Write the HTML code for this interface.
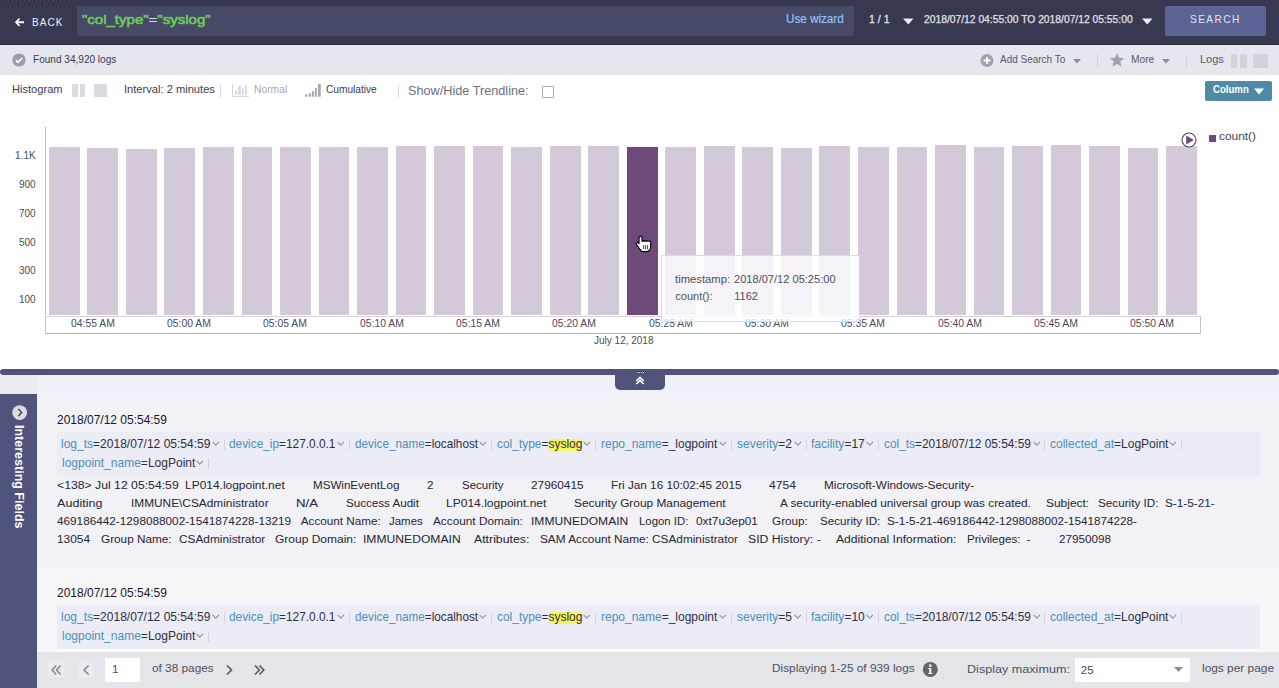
<!DOCTYPE html><html><head><meta charset="utf-8"><style>
*{margin:0;padding:0}
html,body{width:1279px;height:688px;overflow:hidden;background:#fff}
body{position:relative;font-family:"Liberation Sans", sans-serif}
.b{position:absolute}
.t{position:absolute;white-space:pre;line-height:1;font-family:"Liberation Sans", sans-serif}
.chev{display:inline-block;width:6px;height:6px;border-right:1px solid #9a9aa8;border-bottom:1px solid #9a9aa8;transform:translateY(-3px) rotate(45deg) scale(0.8);margin-left:3px;margin-right:4px}
.sep{display:inline-block;width:1px;height:11px;background:#cfcfd8;vertical-align:-1px}
</style></head><body><div class="b" style="left:0px;top:0px;width:1279px;height:45px;background:#363950;"></div>
<div class="b" style="left:0px;top:44px;width:1279px;height:1px;background:#2a2d40;"></div>
<svg class="b" style="left:0;top:0" width="80" height="10"><rect x="6" y="1" width="1" height="1" fill="#15172b"/><rect x="8" y="1" width="1" height="1" fill="#5a4852"/><rect x="10" y="1" width="1" height="1" fill="#15172b"/><rect x="12" y="1" width="1" height="1" fill="#5a4852"/><rect x="14" y="1" width="1" height="1" fill="#15172b"/><rect x="16" y="1" width="1" height="1" fill="#5a4852"/><rect x="18" y="1" width="1" height="1" fill="#15172b"/><rect x="20" y="1" width="1" height="1" fill="#5a4852"/><rect x="22" y="1" width="1" height="1" fill="#15172b"/><rect x="24" y="1" width="1" height="1" fill="#5a4852"/><rect x="26" y="1" width="1" height="1" fill="#15172b"/><rect x="28" y="1" width="1" height="1" fill="#5a4852"/><rect x="30" y="1" width="1" height="1" fill="#15172b"/><rect x="32" y="1" width="1" height="1" fill="#5a4852"/><rect x="34" y="1" width="1" height="1" fill="#15172b"/><rect x="36" y="1" width="1" height="1" fill="#5a4852"/><rect x="38" y="1" width="1" height="1" fill="#15172b"/><rect x="40" y="1" width="1" height="1" fill="#5a4852"/><rect x="42" y="1" width="1" height="1" fill="#15172b"/><rect x="44" y="1" width="1" height="1" fill="#5a4852"/><rect x="46" y="1" width="1" height="1" fill="#15172b"/><rect x="48" y="1" width="1" height="1" fill="#5a4852"/><rect x="50" y="1" width="1" height="1" fill="#15172b"/><rect x="52" y="1" width="1" height="1" fill="#5a4852"/><rect x="54" y="1" width="1" height="1" fill="#15172b"/><rect x="56" y="1" width="1" height="1" fill="#5a4852"/><rect x="58" y="1" width="1" height="1" fill="#15172b"/><rect x="60" y="1" width="1" height="1" fill="#5a4852"/><rect x="62" y="1" width="1" height="1" fill="#15172b"/><rect x="64" y="1" width="1" height="1" fill="#5a4852"/><rect x="66" y="1" width="1" height="1" fill="#15172b"/><rect x="68" y="1" width="1" height="1" fill="#5a4852"/><rect x="12" y="4" width="1" height="1" fill="#15172b"/><rect x="17" y="4" width="1" height="1" fill="#15172b"/><rect x="24" y="4" width="1" height="1" fill="#15172b"/><rect x="29" y="4" width="1" height="1" fill="#15172b"/><rect x="36" y="4" width="1" height="1" fill="#15172b"/><rect x="41" y="4" width="1" height="1" fill="#15172b"/><rect x="48" y="4" width="1" height="1" fill="#15172b"/><rect x="53" y="4" width="1" height="1" fill="#15172b"/><rect x="60" y="4" width="1" height="1" fill="#15172b"/><rect x="4" y="3" width="1" height="1" fill="#15172b"/><rect x="64" y="5" width="1" height="1" fill="#15172b"/></svg>
<svg class="b" style="left:14px;top:17px" width="11" height="11" viewBox="0 0 11 11"><path d="M0.8 5.2 L4.9 1 L6.2 2.3 L4 4.3 H10 V6.2 H4 L6.2 8.2 L4.9 9.5 Z" fill="#ffffff"/></svg>
<div class="t" style="left:32.00px;top:17px;font-size:10.5px;color:#f2f2f6;font-weight:400;letter-spacing:1.1px;transform:scaleX(0.9498);transform-origin:0 0;">BACK</div>
<div class="b" style="left:77px;top:6px;width:777px;height:30px;background:#474a67;"></div>
<div class="t" style="left:82.00px;top:13px;font-size:13.5px;color:#6bd158;font-weight:400;transform:scaleX(1.1122);transform-origin:0 0;-webkit-text-stroke:0.55px #6bd158;">"col_type"<span style="color:#d8d8e4;-webkit-text-stroke:0.3px #d8d8e4">=</span>"syslog"</div>
<div class="t" style="left:786.10px;top:13px;font-size:12px;color:#94c0f8;font-weight:400;transform:scaleX(0.9726);transform-origin:0 0;-webkit-text-stroke:0.2px #94c0f8;">Use wizard</div>
<div class="t" style="left:868.80px;top:14px;font-size:10.5px;color:#e2e2ea;font-weight:400;transform:scaleX(1.0052);transform-origin:0 0;-webkit-text-stroke:0.3px #e2e2ea;">1 / 1</div>
<svg class="b" style="left:903px;top:18px" width="11" height="7"><path d="M0 0.5 H10.5 L5.25 6.5 Z" fill="#eeeef4"/></svg>
<div class="t" style="left:924.00px;top:14px;font-size:10.5px;color:#e2e2ea;font-weight:400;transform:scaleX(0.9807);transform-origin:0 0;-webkit-text-stroke:0.25px #e2e2ea;">2018/07/12 04:55:00 TO 2018/07/12 05:55:00</div>
<svg class="b" style="left:1142px;top:18px" width="11" height="7"><path d="M0 0.5 H10.5 L5.25 6.5 Z" fill="#eeeef4"/></svg>
<div class="b" style="left:1165px;top:6px;width:101px;height:30px;background:#5e6396;border-radius:2px;"></div>
<div class="t" style="left:1190.10px;top:14px;font-size:10.5px;color:#e4e6f2;font-weight:400;letter-spacing:1.5px;transform:scaleX(0.9618);transform-origin:0 0;">SEARCH</div>
<div class="b" style="left:0px;top:45px;width:1279px;height:30px;background:#e6e6ee;"></div>
<svg class="b" style="left:12px;top:53px" width="14" height="14" viewBox="0 0 14 14"><circle cx="7" cy="7" r="6.6" fill="#9c9ca8"/><path d="M3.8 7.2 L6 9.4 L10.3 5" stroke="#fff" stroke-width="1.7" fill="none"/></svg>
<div class="t" style="left:32.70px;top:55px;font-size:10px;color:#3b3c52;font-weight:400;transform:scaleX(1.0056);transform-origin:0 0;">Found 34,920 logs</div>
<svg class="b" style="left:980px;top:54px" width="14" height="14" viewBox="0 0 14 14"><circle cx="7" cy="6.5" r="6.5" fill="#a2a2ad"/><path d="M7 3 V10 M3.5 6.5 H10.5" stroke="#fff" stroke-width="1.8"/></svg>
<div class="t" style="left:1000.20px;top:54px;font-size:10.5px;color:#55576b;font-weight:400;transform:scaleX(0.9507);transform-origin:0 0;">Add Search To</div>
<svg class="b" style="left:1073px;top:59px" width="9" height="5"><path d="M0 0 H8 L4 4.5 Z" fill="#8c8c98"/></svg>
<div class="b" style="left:1097px;top:54px;width:1px;height:14px;background:#d2d2da;"></div>
<svg class="b" style="left:1109px;top:52px" width="16" height="16" viewBox="0 0 16 16"><path d="M8 1 L10.1 5.8 L15.2 6.2 L11.3 9.5 L12.5 14.6 L8 11.9 L3.5 14.6 L4.7 9.5 L0.8 6.2 L5.9 5.8 Z" fill="#a2a2ad"/></svg>
<div class="t" style="left:1130.70px;top:54px;font-size:10.5px;color:#55576b;font-weight:400;transform:scaleX(0.9698);transform-origin:0 0;">More</div>
<svg class="b" style="left:1162px;top:59px" width="9" height="5"><path d="M0 0 H8 L4 4.5 Z" fill="#8c8c98"/></svg>
<div class="b" style="left:1186px;top:54px;width:1px;height:14px;background:#d2d2da;"></div>
<div class="t" style="left:1199.50px;top:54px;font-size:10.5px;color:#55576b;font-weight:400;transform:scaleX(1.0483);transform-origin:0 0;">Logs</div>
<div class="b" style="left:1231px;top:54px;width:6px;height:14px;background:#d2d2da;"></div>
<div class="b" style="left:1240px;top:54px;width:7px;height:14px;background:#d2d2da;"></div>
<div class="b" style="left:1253px;top:54px;width:15px;height:14px;background:#d2d2da;"></div>
<div class="t" style="left:12.30px;top:84px;font-size:11px;color:#3b3c52;font-weight:400;transform:scaleX(1.0092);transform-origin:0 0;">Histogram</div>
<div class="b" style="left:72px;top:84px;width:6px;height:13px;background:#dcdae2;"></div>
<div class="b" style="left:80px;top:84px;width:5px;height:13px;background:#dcdae2;"></div>
<div class="b" style="left:94px;top:84px;width:13px;height:13px;background:#dcdae2;"></div>
<div class="t" style="left:124.00px;top:84px;font-size:11px;color:#3b3c52;font-weight:400;transform:scaleX(1.0113);transform-origin:0 0;">Interval: 2 minutes</div>
<div class="b" style="left:220px;top:84px;width:1px;height:14px;background:#d8d8e0;"></div>
<svg class="b" style="left:228px;top:80px" width="28" height="20" viewBox="0 0 28 20"><rect x="4" y="4.1" width="1" height="12.7" fill="#d6d4dc"/><rect x="4" y="15.8" width="17" height="1.1" fill="#d6d4dc"/><rect x="7.1" y="10.2" width="1.7" height="4.6" fill="#d9d7df"/><rect x="10.2" y="6.1" width="2.6" height="8.7" fill="#d9d7df"/><rect x="13.8" y="8.1" width="2" height="6.7" fill="#d9d7df"/><rect x="17" y="5.1" width="1.9" height="9.7" fill="#d9d7df"/></svg>
<div class="t" style="left:253.60px;top:84px;font-size:10.5px;color:#a6a6b2;font-weight:400;transform:scaleX(0.9817);transform-origin:0 0;">Normal</div>
<svg class="b" style="left:300px;top:80px" width="28" height="20" viewBox="0 0 28 20"><rect x="5.2" y="14.5" width="2.6" height="2.2" fill="#a6a8b6"/><rect x="8.9" y="13.2" width="2" height="3.5" fill="#a6a8b6"/><rect x="11.9" y="11.2" width="2.1" height="5.5" fill="#a6a8b6"/><rect x="15" y="8" width="1.9" height="8.7" fill="#a6a8b6"/><rect x="18" y="3.9" width="2.8" height="12.8" fill="#a6a8b6"/></svg>
<div class="t" style="left:326.10px;top:84px;font-size:10.5px;color:#3b3c52;font-weight:400;transform:scaleX(0.9653);transform-origin:0 0;">Cumulative</div>
<div class="b" style="left:398px;top:85px;width:1px;height:13px;background:#d8d8e0;"></div>
<div class="t" style="left:407.60px;top:85px;font-size:12.5px;color:#6e6e7e;font-weight:400;transform:scaleX(1.0150);transform-origin:0 0;">Show/Hide Trendline:</div>
<div class="b" style="left:542px;top:86px;width:12px;height:12px;background:#ffffff;border:1px solid #a8a8b2;box-sizing:border-box;border-radius:1px;"></div>
<div class="b" style="left:1205px;top:81px;width:67px;height:20px;background:#4f8aa8;border-radius:2px;"></div>
<div class="t" style="left:1212.80px;top:84px;font-size:10.5px;color:#ffffff;font-weight:700;transform:scaleX(0.9153);transform-origin:0 0;">Column</div>
<svg class="b" style="left:1254px;top:88px" width="11" height="7"><path d="M0 0.5 H10 L5 6.5 Z" fill="#ffffff"/></svg>
<div class="b" style="left:45px;top:127px;width:1px;height:188px;background:#bcbcc8;"></div>
<div class="t" style="left:15.12px;top:151px;font-size:10px;color:#4a4a5a;font-weight:400;">1.1K</div>
<div class="t" style="left:19.01px;top:180px;font-size:10px;color:#4a4a5a;font-weight:400;">900</div>
<div class="t" style="left:19.01px;top:209px;font-size:10px;color:#4a4a5a;font-weight:400;">700</div>
<div class="t" style="left:19.01px;top:238px;font-size:10px;color:#4a4a5a;font-weight:400;">500</div>
<div class="t" style="left:19.01px;top:266px;font-size:10px;color:#4a4a5a;font-weight:400;">300</div>
<div class="t" style="left:19.01px;top:295px;font-size:10px;color:#4a4a5a;font-weight:400;">100</div>
<div class="b" style="left:48.85px;top:147.0px;width:30.8px;height:168.0px;background:#d3c9d9"></div>
<div class="b" style="left:87.38px;top:147.8px;width:30.8px;height:167.2px;background:#d3c9d9"></div>
<div class="b" style="left:125.91px;top:149.4px;width:30.8px;height:165.6px;background:#d3c9d9"></div>
<div class="b" style="left:164.44px;top:147.5px;width:30.8px;height:167.5px;background:#d3c9d9"></div>
<div class="b" style="left:202.97px;top:147.2px;width:30.8px;height:167.8px;background:#d3c9d9"></div>
<div class="b" style="left:241.50px;top:147.0px;width:30.8px;height:168.0px;background:#d3c9d9"></div>
<div class="b" style="left:280.03px;top:147.0px;width:30.8px;height:168.0px;background:#d3c9d9"></div>
<div class="b" style="left:318.56px;top:146.6px;width:30.8px;height:168.4px;background:#d3c9d9"></div>
<div class="b" style="left:357.09px;top:146.7px;width:30.8px;height:168.3px;background:#d3c9d9"></div>
<div class="b" style="left:395.62px;top:145.8px;width:30.8px;height:169.2px;background:#d3c9d9"></div>
<div class="b" style="left:434.15px;top:145.9px;width:30.8px;height:169.1px;background:#d3c9d9"></div>
<div class="b" style="left:472.68px;top:146.2px;width:30.8px;height:168.8px;background:#d3c9d9"></div>
<div class="b" style="left:511.21px;top:147.0px;width:30.8px;height:168.0px;background:#d3c9d9"></div>
<div class="b" style="left:549.74px;top:145.9px;width:30.8px;height:169.1px;background:#d3c9d9"></div>
<div class="b" style="left:588.27px;top:145.8px;width:30.8px;height:169.2px;background:#d3c9d9"></div>
<div class="b" style="left:626.80px;top:146.9px;width:30.8px;height:168.1px;background:#6d4a7a"></div>
<div class="b" style="left:665.33px;top:147.0px;width:30.8px;height:168.0px;background:#d3c9d9"></div>
<div class="b" style="left:703.86px;top:145.9px;width:30.8px;height:169.1px;background:#d3c9d9"></div>
<div class="b" style="left:742.39px;top:146.9px;width:30.8px;height:168.1px;background:#d3c9d9"></div>
<div class="b" style="left:780.92px;top:147.8px;width:30.8px;height:167.2px;background:#d3c9d9"></div>
<div class="b" style="left:819.45px;top:145.9px;width:30.8px;height:169.1px;background:#d3c9d9"></div>
<div class="b" style="left:857.98px;top:146.9px;width:30.8px;height:168.1px;background:#d3c9d9"></div>
<div class="b" style="left:896.51px;top:146.9px;width:30.8px;height:168.1px;background:#d3c9d9"></div>
<div class="b" style="left:935.04px;top:145.2px;width:30.8px;height:169.8px;background:#d3c9d9"></div>
<div class="b" style="left:973.57px;top:146.6px;width:30.8px;height:168.4px;background:#d3c9d9"></div>
<div class="b" style="left:1012.10px;top:145.6px;width:30.8px;height:169.4px;background:#d3c9d9"></div>
<div class="b" style="left:1050.63px;top:145.2px;width:30.8px;height:169.8px;background:#d3c9d9"></div>
<div class="b" style="left:1089.16px;top:145.9px;width:30.8px;height:169.1px;background:#d3c9d9"></div>
<div class="b" style="left:1127.69px;top:147.8px;width:30.8px;height:167.2px;background:#d3c9d9"></div>
<div class="b" style="left:1166.22px;top:146.2px;width:30.8px;height:168.8px;background:#d3c9d9"></div>
<div class="b" style="left:45px;top:316px;width:1156px;height:18px;border:1px solid #c4c2ce;box-sizing:border-box;border-top-color:#d8d2de;border-bottom-color:#aeaebc;border-radius:0 0 1px 1px"></div>
<div class="t" style="left:70.70px;top:319px;font-size:10px;color:#4a4a5a;font-weight:400;transform:scaleX(1.0370);transform-origin:0 0;">04:55 AM</div>
<div class="t" style="left:167.03px;top:319px;font-size:10px;color:#4a4a5a;font-weight:400;transform:scaleX(1.0370);transform-origin:0 0;">05:00 AM</div>
<div class="t" style="left:263.36px;top:319px;font-size:10px;color:#4a4a5a;font-weight:400;transform:scaleX(1.0370);transform-origin:0 0;">05:05 AM</div>
<div class="t" style="left:359.69px;top:319px;font-size:10px;color:#4a4a5a;font-weight:400;transform:scaleX(1.0370);transform-origin:0 0;">05:10 AM</div>
<div class="t" style="left:456.02px;top:319px;font-size:10px;color:#4a4a5a;font-weight:400;transform:scaleX(1.0370);transform-origin:0 0;">05:15 AM</div>
<div class="t" style="left:552.35px;top:319px;font-size:10px;color:#4a4a5a;font-weight:400;transform:scaleX(1.0370);transform-origin:0 0;">05:20 AM</div>
<div class="t" style="left:648.68px;top:319px;font-size:10px;color:#4a4a5a;font-weight:400;transform:scaleX(1.0370);transform-origin:0 0;">05:25 AM</div>
<div class="t" style="left:745.01px;top:319px;font-size:10px;color:#4a4a5a;font-weight:400;transform:scaleX(1.0370);transform-origin:0 0;">05:30 AM</div>
<div class="t" style="left:841.34px;top:319px;font-size:10px;color:#4a4a5a;font-weight:400;transform:scaleX(1.0370);transform-origin:0 0;">05:35 AM</div>
<div class="t" style="left:937.67px;top:319px;font-size:10px;color:#4a4a5a;font-weight:400;transform:scaleX(1.0370);transform-origin:0 0;">05:40 AM</div>
<div class="t" style="left:1034.00px;top:319px;font-size:10px;color:#4a4a5a;font-weight:400;transform:scaleX(1.0370);transform-origin:0 0;">05:45 AM</div>
<div class="t" style="left:1130.33px;top:319px;font-size:10px;color:#4a4a5a;font-weight:400;transform:scaleX(1.0370);transform-origin:0 0;">05:50 AM</div>
<div class="t" style="left:593.60px;top:335px;font-size:10.5px;color:#4a4a5a;font-weight:400;transform:scaleX(0.9525);transform-origin:0 0;">July 12, 2018</div>
<div class="b" style="left:661px;top:255px;width:199px;height:67px;background:rgba(255,255,255,0.78);border:1px solid rgba(215,215,225,0.9);box-sizing:border-box;"></div>
<div class="t" style="left:675.30px;top:274px;font-size:11px;color:#4e4e5e;font-weight:400;transform:scaleX(1.0242);transform-origin:0 0;">timestamp:</div>
<div class="t" style="left:734.30px;top:274px;font-size:11px;color:#4e4e5e;font-weight:400;transform:scaleX(1.0064);transform-origin:0 0;">2018/07/12 05:25:00</div>
<div class="t" style="left:675.30px;top:291px;font-size:11px;color:#4e4e5e;font-weight:400;">count():</div>
<div class="t" style="left:734.30px;top:291px;font-size:11px;color:#4e4e5e;font-weight:400;">1162</div>
<svg class="b" style="left:630px;top:230px" width="26" height="26" viewBox="0 0 26 26"><path d="M9 7.6 Q10.5 4.8 12.1 7.6 L12.1 11.4 Q13.4 10.1 14.8 11.3 Q15.9 10.1 17.1 11.3 Q18.2 10.2 19.3 11.3 Q20.9 10.9 20.8 12.9 L20.6 18.4 Q19.6 21.6 17 21.6 L12.6 21.6 Q11.2 21.4 10.5 20.1 L6.3 14.3 Q5.6 12.5 7.3 12.5 Q8.2 12.6 9 13.7 Z" fill="#fff" stroke="#0a0a10" stroke-width="1.25" stroke-linejoin="round"/><path d="M13.6 15.2 V19.2 M15.6 15.2 V19.2 M17.6 15.2 V19.2" stroke="#2a2a35" stroke-width="0.9"/></svg>
<svg class="b" style="left:1181px;top:132px" width="16" height="16" viewBox="0 0 16 16"><circle cx="8" cy="8" r="7" fill="#fff" stroke="#4a4a55" stroke-width="1.1"/><path d="M5.2 3.6 L13 8 L5.2 12.4 Z" fill="#6d4a7a"/></svg>
<div class="b" style="left:1208.5px;top:134.5px;width:7.5px;height:7.5px;background:#6d4a7a;"></div>
<div class="t" style="left:1218.80px;top:131px;font-size:11.5px;color:#454556;font-weight:400;transform:scaleX(1.0351);transform-origin:0 0;">count()</div>
<div class="b" style="left:0px;top:375px;width:37px;height:19px;background:#ececf0;"></div>
<div class="b" style="left:37px;top:375px;width:1242px;height:19px;background:#eff1f8;"></div>
<div class="b" style="left:0px;top:369px;width:1279px;height:6px;background:#51547a;border-radius:3px;"></div>
<div class="b" style="left:615px;top:374px;width:50px;height:16px;background:#51547a;border-radius:0 0 5px 5px"></div>
<svg class="b" style="left:635px;top:370px" width="10" height="16" viewBox="0 0 10 16"><rect x="2" y="1" width="1" height="1" fill="#22243a"/><rect x="4" y="1" width="1" height="1" fill="#22243a"/><rect x="6" y="1" width="1" height="1" fill="#22243a"/><rect x="8" y="1" width="1" height="1" fill="#22243a"/><rect x="2" y="2" width="1" height="1" fill="#e8e8f0"/><rect x="4" y="2" width="1" height="1" fill="#e8e8f0"/><rect x="6" y="2" width="1" height="1" fill="#e8e8f0"/><rect x="8" y="2" width="1" height="1" fill="#e8e8f0"/><path d="M1.3 11 L5 7.4 L8.7 11 M1.3 14 L5 10.4 L8.7 14" stroke="#fff" stroke-width="1.6" fill="none"/></svg>
<div class="b" style="left:0px;top:394px;width:37px;height:294px;background:#50537b;"></div>
<svg class="b" style="left:12px;top:405px" width="16" height="16" viewBox="0 0 16 16"><circle cx="7.7" cy="7.6" r="7.4" fill="#dcdbe2"/><path d="M6.3 3.9 L9.6 7.6 L6.3 11.3" stroke="#44465e" stroke-width="1.5" fill="none"/></svg>
<div class="t" style="left:11.7px;top:425px;font-size:12.5px;font-weight:700;color:#ffffff;writing-mode:vertical-rl;line-height:14px">Interesting Fields</div>
<div class="b" style="left:37px;top:394px;width:1242px;height:174px;background:#f2f1f6;"></div>
<div class="b" style="left:37px;top:568px;width:1242px;height:84px;background:#f6f6f9;"></div>
<div class="t" style="left:57.00px;top:415px;font-size:11.85px;color:#181822;font-weight:400;transform:scaleX(1.0118);transform-origin:0 0;">2018/07/12 05:54:59</div>
<div class="b" style="left:57px;top:432px;width:1203px;height:44px;background:#ebecf5;"></div>
<div class="t" style="left:61.30px;top:439px;font-size:11.9px;color:#2f2f3f;font-weight:400;transform:scaleX(1.0114);transform-origin:0 0;"><span style="color:#4f8fb8">log_ts</span>=2018/07/12 05:54:59</div>
<svg class="b" style="left:212.0px;top:440.9px" width="8" height="6" viewBox="0 0 8 6"><path d="M0.6 0.8 L3.8 4.2 L7 0.8" stroke="#9494a2" stroke-width="1.15" fill="none"/></svg>
<div class="b" style="left:224px;top:439px;width:1px;height:11px;background:#d3d3db"></div>
<div class="t" style="left:229.20px;top:439px;font-size:11.9px;color:#2f2f3f;font-weight:400;transform:scaleX(0.9967);transform-origin:0 0;"><span style="color:#4f8fb8">device_ip</span>=127.0.0.1</div>
<svg class="b" style="left:336.9px;top:440.9px" width="8" height="6" viewBox="0 0 8 6"><path d="M0.6 0.8 L3.8 4.2 L7 0.8" stroke="#9494a2" stroke-width="1.15" fill="none"/></svg>
<div class="b" style="left:349px;top:439px;width:1px;height:11px;background:#d3d3db"></div>
<div class="t" style="left:355.10px;top:439px;font-size:11.9px;color:#2f2f3f;font-weight:400;transform:scaleX(0.9874);transform-origin:0 0;"><span style="color:#4f8fb8">device_name</span>=localhost</div>
<svg class="b" style="left:479.4px;top:440.9px" width="8" height="6" viewBox="0 0 8 6"><path d="M0.6 0.8 L3.8 4.2 L7 0.8" stroke="#9494a2" stroke-width="1.15" fill="none"/></svg>
<div class="b" style="left:491px;top:439px;width:1px;height:11px;background:#d3d3db"></div>
<div class="b" style="left:549px;top:439px;width:33px;height:12px;background:#f6f55c;"></div>
<div class="t" style="left:496.60px;top:439px;font-size:11.9px;color:#2f2f3f;font-weight:400;transform:scaleX(1.0047);transform-origin:0 0;"><span style="color:#4f8fb8">col_type</span>=syslog</div>
<svg class="b" style="left:583.2px;top:440.9px" width="8" height="6" viewBox="0 0 8 6"><path d="M0.6 0.8 L3.8 4.2 L7 0.8" stroke="#9494a2" stroke-width="1.15" fill="none"/></svg>
<div class="b" style="left:595px;top:439px;width:1px;height:11px;background:#d3d3db"></div>
<div class="t" style="left:601.30px;top:439px;font-size:11.9px;color:#2f2f3f;font-weight:400;transform:scaleX(1.0085);transform-origin:0 0;"><span style="color:#4f8fb8">repo_name</span>=_logpoint</div>
<svg class="b" style="left:718.9px;top:440.9px" width="8" height="6" viewBox="0 0 8 6"><path d="M0.6 0.8 L3.8 4.2 L7 0.8" stroke="#9494a2" stroke-width="1.15" fill="none"/></svg>
<div class="b" style="left:731px;top:439px;width:1px;height:11px;background:#d3d3db"></div>
<div class="t" style="left:737.30px;top:439px;font-size:11.9px;color:#2f2f3f;font-weight:400;transform:scaleX(1.0079);transform-origin:0 0;"><span style="color:#4f8fb8">severity</span>=2</div>
<svg class="b" style="left:793.5px;top:440.9px" width="8" height="6" viewBox="0 0 8 6"><path d="M0.6 0.8 L3.8 4.2 L7 0.8" stroke="#9494a2" stroke-width="1.15" fill="none"/></svg>
<div class="b" style="left:806px;top:439px;width:1px;height:11px;background:#d3d3db"></div>
<div class="t" style="left:810.50px;top:439px;font-size:11.9px;color:#2f2f3f;font-weight:400;transform:scaleX(1.0102);transform-origin:0 0;"><span style="color:#4f8fb8">facility</span>=17</div>
<svg class="b" style="left:865.5px;top:440.9px" width="8" height="6" viewBox="0 0 8 6"><path d="M0.6 0.8 L3.8 4.2 L7 0.8" stroke="#9494a2" stroke-width="1.15" fill="none"/></svg>
<div class="b" style="left:878px;top:439px;width:1px;height:11px;background:#d3d3db"></div>
<div class="t" style="left:884.40px;top:439px;font-size:11.9px;color:#2f2f3f;font-weight:400;transform:scaleX(0.9982);transform-origin:0 0;"><span style="color:#4f8fb8">col_ts</span>=2018/07/12 05:54:59</div>
<svg class="b" style="left:1032.5px;top:440.9px" width="8" height="6" viewBox="0 0 8 6"><path d="M0.6 0.8 L3.8 4.2 L7 0.8" stroke="#9494a2" stroke-width="1.15" fill="none"/></svg>
<div class="b" style="left:1044px;top:439px;width:1px;height:11px;background:#d3d3db"></div>
<div class="t" style="left:1049.70px;top:439px;font-size:11.9px;color:#2f2f3f;font-weight:400;transform:scaleX(1.0094);transform-origin:0 0;"><span style="color:#4f8fb8">collected_at</span>=LogPoint</div>
<svg class="b" style="left:1169.4px;top:440.9px" width="8" height="6" viewBox="0 0 8 6"><path d="M0.6 0.8 L3.8 4.2 L7 0.8" stroke="#9494a2" stroke-width="1.15" fill="none"/></svg>
<div class="b" style="left:1181px;top:439px;width:1px;height:11px;background:#d3d3db"></div>
<div class="t" style="left:61.50px;top:458px;font-size:11.9px;color:#2f2f3f;font-weight:400;transform:scaleX(1.0110);transform-origin:0 0;"><span style="color:#4f8fb8">logpoint_name</span>=LogPoint</div>
<svg class="b" style="left:196.1px;top:459.8px" width="8" height="6" viewBox="0 0 8 6"><path d="M0.6 0.8 L3.8 4.2 L7 0.8" stroke="#9494a2" stroke-width="1.15" fill="none"/></svg>
<div class="b" style="left:208px;top:458px;width:1px;height:11px;background:#d3d3db"></div>
<div class="t" style="left:56.90px;top:479px;font-size:11.7px;color:#262633;font-weight:400;transform:scaleX(1.0460);transform-origin:0 0;">&lt;138&gt; Jul 12 05:54:59</div>
<div class="t" style="left:185.10px;top:479px;font-size:11.7px;color:#262633;font-weight:400;transform:scaleX(1.0233);transform-origin:0 0;">LP014.logpoint.net</div>
<div class="t" style="left:313.30px;top:479px;font-size:11.7px;color:#262633;font-weight:400;transform:scaleX(0.9917);transform-origin:0 0;">MSWinEventLog</div>
<div class="t" style="left:426.90px;top:479px;font-size:11.7px;color:#262633;font-weight:400;">2</div>
<div class="t" style="left:461.90px;top:479px;font-size:11.7px;color:#262633;font-weight:400;transform:scaleX(0.9831);transform-origin:0 0;">Security</div>
<div class="t" style="left:531.30px;top:479px;font-size:11.7px;color:#262633;font-weight:400;transform:scaleX(1.0102);transform-origin:0 0;">27960415</div>
<div class="t" style="left:611.40px;top:479px;font-size:11.7px;color:#262633;font-weight:400;transform:scaleX(1.0036);transform-origin:0 0;">Fri Jan 16 10:02:45 2015</div>
<div class="t" style="left:769.00px;top:479px;font-size:11.7px;color:#262633;font-weight:400;transform:scaleX(1.0367);transform-origin:0 0;">4754</div>
<div class="t" style="left:824.00px;top:479px;font-size:11.7px;color:#262633;font-weight:400;transform:scaleX(1.0096);transform-origin:0 0;">Microsoft-Windows-Security-</div>
<div class="t" style="left:57.00px;top:497px;font-size:11.7px;color:#262633;font-weight:400;transform:scaleX(1.0795);transform-origin:0 0;">Auditing</div>
<div class="t" style="left:130.70px;top:497px;font-size:11.7px;color:#262633;font-weight:400;transform:scaleX(1.0141);transform-origin:0 0;">IMMUNE\CSAdministrator</div>
<div class="t" style="left:296.40px;top:497px;font-size:11.7px;color:#262633;font-weight:400;transform:scaleX(1.1322);transform-origin:0 0;">N/A</div>
<div class="t" style="left:345.50px;top:497px;font-size:11.7px;color:#262633;font-weight:400;transform:scaleX(0.9933);transform-origin:0 0;">Success Audit</div>
<div class="t" style="left:446.30px;top:497px;font-size:11.7px;color:#262633;font-weight:400;transform:scaleX(1.0295);transform-origin:0 0;">LP014.logpoint.net</div>
<div class="t" style="left:573.90px;top:497px;font-size:11.7px;color:#262633;font-weight:400;transform:scaleX(1.0149);transform-origin:0 0;">Security Group Management</div>
<div class="t" style="left:780.30px;top:497px;font-size:11.7px;color:#262633;font-weight:400;transform:scaleX(1.0081);transform-origin:0 0;">A security-enabled universal group was created.</div>
<div class="t" style="left:1045.80px;top:497px;font-size:11.7px;color:#262633;font-weight:400;transform:scaleX(1.0218);transform-origin:0 0;">Subject:</div>
<div class="t" style="left:1098.30px;top:497px;font-size:11.7px;color:#262633;font-weight:400;transform:scaleX(1.0005);transform-origin:0 0;">Security ID:</div>
<div class="t" style="left:1165.30px;top:497px;font-size:11.7px;color:#262633;font-weight:400;transform:scaleX(1.0054);transform-origin:0 0;">S-1-5-21-</div>
<div class="t" style="left:57.00px;top:515px;font-size:11.7px;color:#262633;font-weight:400;transform:scaleX(1.0063);transform-origin:0 0;">469186442-1298088002-1541874228-13219</div>
<div class="t" style="left:300.80px;top:515px;font-size:11.7px;color:#262633;font-weight:400;">Account Name:</div>
<div class="t" style="left:389.30px;top:515px;font-size:11.7px;color:#262633;font-weight:400;transform:scaleX(0.9820);transform-origin:0 0;">James</div>
<div class="t" style="left:433.10px;top:515px;font-size:11.7px;color:#262633;font-weight:400;transform:scaleX(1.0095);transform-origin:0 0;">Account Domain:</div>
<div class="t" style="left:530.70px;top:515px;font-size:11.7px;color:#262633;font-weight:400;transform:scaleX(1.0330);transform-origin:0 0;">IMMUNEDOMAIN</div>
<div class="t" style="left:638.60px;top:515px;font-size:11.7px;color:#262633;font-weight:400;transform:scaleX(0.9728);transform-origin:0 0;">Logon ID:</div>
<div class="t" style="left:696.40px;top:515px;font-size:11.7px;color:#262633;font-weight:400;transform:scaleX(1.0140);transform-origin:0 0;">0xt7u3ep01</div>
<div class="t" style="left:772.10px;top:515px;font-size:11.7px;color:#262633;font-weight:400;">Group:</div>
<div class="t" style="left:820.00px;top:515px;font-size:11.7px;color:#262633;font-weight:400;transform:scaleX(0.9988);transform-origin:0 0;">Security ID:</div>
<div class="t" style="left:886.90px;top:515px;font-size:11.7px;color:#262633;font-weight:400;transform:scaleX(1.0016);transform-origin:0 0;">S-1-5-21-469186442-1298088002-1541874228-</div>
<div class="t" style="left:57.00px;top:533px;font-size:11.7px;color:#262633;font-weight:400;transform:scaleX(1.0165);transform-origin:0 0;">13054</div>
<div class="t" style="left:100.70px;top:533px;font-size:11.7px;color:#262633;font-weight:400;transform:scaleX(1.0069);transform-origin:0 0;">Group Name:</div>
<div class="t" style="left:178.90px;top:533px;font-size:11.7px;color:#262633;font-weight:400;transform:scaleX(1.0136);transform-origin:0 0;">CSAdministrator</div>
<div class="t" style="left:274.50px;top:533px;font-size:11.7px;color:#262633;font-weight:400;transform:scaleX(1.0264);transform-origin:0 0;">Group Domain:</div>
<div class="t" style="left:362.70px;top:533px;font-size:11.7px;color:#262633;font-weight:400;transform:scaleX(1.0373);transform-origin:0 0;">IMMUNEDOMAIN</div>
<div class="t" style="left:473.80px;top:533px;font-size:11.7px;color:#262633;font-weight:400;transform:scaleX(1.0524);transform-origin:0 0;">Attributes:</div>
<div class="t" style="left:539.50px;top:533px;font-size:11.7px;color:#262633;font-weight:400;transform:scaleX(1.0090);transform-origin:0 0;">SAM Account Name: CSAdministrator</div>
<div class="t" style="left:748.00px;top:533px;font-size:11.7px;color:#262633;font-weight:400;transform:scaleX(1.0455);transform-origin:0 0;">SID History:</div>
<div class="t" style="left:816.90px;top:533px;font-size:11.7px;color:#262633;font-weight:400;">-</div>
<div class="t" style="left:835.60px;top:533px;font-size:11.7px;color:#262633;font-weight:400;transform:scaleX(1.0359);transform-origin:0 0;">Additional Information:</div>
<div class="t" style="left:966.70px;top:533px;font-size:11.7px;color:#262633;font-weight:400;transform:scaleX(0.9908);transform-origin:0 0;">Privileges:</div>
<div class="t" style="left:1026.40px;top:533px;font-size:11.7px;color:#262633;font-weight:400;">-</div>
<div class="t" style="left:1058.90px;top:533px;font-size:11.7px;color:#262633;font-weight:400;transform:scaleX(0.9984);transform-origin:0 0;">27950098</div>
<div class="t" style="left:57.00px;top:588px;font-size:11.85px;color:#181822;font-weight:400;transform:scaleX(1.0118);transform-origin:0 0;">2018/07/12 05:54:59</div>
<div class="b" style="left:57px;top:605px;width:1203px;height:44px;background:#ebecf5;"></div>
<div class="t" style="left:61.30px;top:612px;font-size:11.9px;color:#2f2f3f;font-weight:400;transform:scaleX(1.0114);transform-origin:0 0;"><span style="color:#4f8fb8">log_ts</span>=2018/07/12 05:54:59</div>
<svg class="b" style="left:212.0px;top:613.9px" width="8" height="6" viewBox="0 0 8 6"><path d="M0.6 0.8 L3.8 4.2 L7 0.8" stroke="#9494a2" stroke-width="1.15" fill="none"/></svg>
<div class="b" style="left:224px;top:612px;width:1px;height:11px;background:#d3d3db"></div>
<div class="t" style="left:229.20px;top:612px;font-size:11.9px;color:#2f2f3f;font-weight:400;transform:scaleX(0.9967);transform-origin:0 0;"><span style="color:#4f8fb8">device_ip</span>=127.0.0.1</div>
<svg class="b" style="left:336.9px;top:613.9px" width="8" height="6" viewBox="0 0 8 6"><path d="M0.6 0.8 L3.8 4.2 L7 0.8" stroke="#9494a2" stroke-width="1.15" fill="none"/></svg>
<div class="b" style="left:349px;top:612px;width:1px;height:11px;background:#d3d3db"></div>
<div class="t" style="left:355.10px;top:612px;font-size:11.9px;color:#2f2f3f;font-weight:400;transform:scaleX(0.9874);transform-origin:0 0;"><span style="color:#4f8fb8">device_name</span>=localhost</div>
<svg class="b" style="left:479.4px;top:613.9px" width="8" height="6" viewBox="0 0 8 6"><path d="M0.6 0.8 L3.8 4.2 L7 0.8" stroke="#9494a2" stroke-width="1.15" fill="none"/></svg>
<div class="b" style="left:491px;top:612px;width:1px;height:11px;background:#d3d3db"></div>
<div class="b" style="left:549px;top:612px;width:33px;height:12px;background:#f6f55c;"></div>
<div class="t" style="left:496.60px;top:612px;font-size:11.9px;color:#2f2f3f;font-weight:400;transform:scaleX(1.0047);transform-origin:0 0;"><span style="color:#4f8fb8">col_type</span>=syslog</div>
<svg class="b" style="left:583.2px;top:613.9px" width="8" height="6" viewBox="0 0 8 6"><path d="M0.6 0.8 L3.8 4.2 L7 0.8" stroke="#9494a2" stroke-width="1.15" fill="none"/></svg>
<div class="b" style="left:595px;top:612px;width:1px;height:11px;background:#d3d3db"></div>
<div class="t" style="left:601.30px;top:612px;font-size:11.9px;color:#2f2f3f;font-weight:400;transform:scaleX(1.0085);transform-origin:0 0;"><span style="color:#4f8fb8">repo_name</span>=_logpoint</div>
<svg class="b" style="left:718.9px;top:613.9px" width="8" height="6" viewBox="0 0 8 6"><path d="M0.6 0.8 L3.8 4.2 L7 0.8" stroke="#9494a2" stroke-width="1.15" fill="none"/></svg>
<div class="b" style="left:731px;top:612px;width:1px;height:11px;background:#d3d3db"></div>
<div class="t" style="left:737.30px;top:612px;font-size:11.9px;color:#2f2f3f;font-weight:400;transform:scaleX(1.0079);transform-origin:0 0;"><span style="color:#4f8fb8">severity</span>=5</div>
<svg class="b" style="left:793.5px;top:613.9px" width="8" height="6" viewBox="0 0 8 6"><path d="M0.6 0.8 L3.8 4.2 L7 0.8" stroke="#9494a2" stroke-width="1.15" fill="none"/></svg>
<div class="b" style="left:806px;top:612px;width:1px;height:11px;background:#d3d3db"></div>
<div class="t" style="left:810.50px;top:612px;font-size:11.9px;color:#2f2f3f;font-weight:400;transform:scaleX(1.0102);transform-origin:0 0;"><span style="color:#4f8fb8">facility</span>=10</div>
<svg class="b" style="left:865.5px;top:613.9px" width="8" height="6" viewBox="0 0 8 6"><path d="M0.6 0.8 L3.8 4.2 L7 0.8" stroke="#9494a2" stroke-width="1.15" fill="none"/></svg>
<div class="b" style="left:878px;top:612px;width:1px;height:11px;background:#d3d3db"></div>
<div class="t" style="left:884.40px;top:612px;font-size:11.9px;color:#2f2f3f;font-weight:400;transform:scaleX(0.9982);transform-origin:0 0;"><span style="color:#4f8fb8">col_ts</span>=2018/07/12 05:54:59</div>
<svg class="b" style="left:1032.5px;top:613.9px" width="8" height="6" viewBox="0 0 8 6"><path d="M0.6 0.8 L3.8 4.2 L7 0.8" stroke="#9494a2" stroke-width="1.15" fill="none"/></svg>
<div class="b" style="left:1044px;top:612px;width:1px;height:11px;background:#d3d3db"></div>
<div class="t" style="left:1049.70px;top:612px;font-size:11.9px;color:#2f2f3f;font-weight:400;transform:scaleX(1.0094);transform-origin:0 0;"><span style="color:#4f8fb8">collected_at</span>=LogPoint</div>
<svg class="b" style="left:1169.4px;top:613.9px" width="8" height="6" viewBox="0 0 8 6"><path d="M0.6 0.8 L3.8 4.2 L7 0.8" stroke="#9494a2" stroke-width="1.15" fill="none"/></svg>
<div class="b" style="left:1181px;top:612px;width:1px;height:11px;background:#d3d3db"></div>
<div class="t" style="left:61.50px;top:631px;font-size:11.9px;color:#2f2f3f;font-weight:400;transform:scaleX(1.0110);transform-origin:0 0;"><span style="color:#4f8fb8">logpoint_name</span>=LogPoint</div>
<svg class="b" style="left:196.1px;top:632.8px" width="8" height="6" viewBox="0 0 8 6"><path d="M0.6 0.8 L3.8 4.2 L7 0.8" stroke="#9494a2" stroke-width="1.15" fill="none"/></svg>
<div class="b" style="left:208px;top:631px;width:1px;height:11px;background:#d3d3db"></div>
<div class="b" style="left:37px;top:649px;width:1242px;height:3px;background:#fafafc;"></div>
<div class="b" style="left:37px;top:652px;width:1242px;height:36px;background:#e4e5e9;"></div>
<div class="b" style="left:48px;top:661px;width:16px;height:17px;background:#ebebef;"></div>
<svg class="b" style="left:50px;top:664px" width="13" height="12" viewBox="0 0 13 12"><path d="M6.2 1.5 L2.2 6 L6.2 10.5 M10.6 1.5 L6.6 6 L10.6 10.5" stroke="#858592" stroke-width="1.5" fill="none"/></svg>
<div class="b" style="left:78px;top:661px;width:16px;height:17px;background:#ebebef;"></div>
<svg class="b" style="left:81px;top:664px" width="10" height="12" viewBox="0 0 10 12"><path d="M7.6 1.5 L3 6 L7.6 10.5" stroke="#858592" stroke-width="1.5" fill="none"/></svg>
<div class="b" style="left:105px;top:658px;width:35px;height:24px;background:#ffffff;"></div>
<div class="t" style="left:112.00px;top:664px;font-size:11.5px;color:#4a4a5a;font-weight:400;">1</div>
<div class="t" style="left:152.30px;top:663px;font-size:11.5px;color:#50505e;font-weight:400;transform:scaleX(1.0264);transform-origin:0 0;">of 38 pages</div>
<svg class="b" style="left:225px;top:664px" width="10" height="12" viewBox="0 0 10 12"><path d="M2 1.5 L6.5 6 L2 10.5" stroke="#55556a" stroke-width="1.7" fill="none"/></svg>
<svg class="b" style="left:253px;top:664px" width="14" height="12" viewBox="0 0 14 12"><path d="M2 1.5 L6.3 6 L2 10.5 M6.5 1.5 L10.8 6 L6.5 10.5" stroke="#55556a" stroke-width="1.6" fill="none"/></svg>
<div class="t" style="left:772.20px;top:662px;font-size:11.7px;color:#50505e;font-weight:400;transform:scaleX(1.0117);transform-origin:0 0;">Displaying 1-25 of 939 logs</div>
<svg class="b" style="left:922px;top:661px" width="17" height="17" viewBox="0 0 17 17"><circle cx="8.3" cy="8.4" r="7.5" fill="#646469"/><circle cx="8.3" cy="4.6" r="1.3" fill="#fff"/><path d="M6.3 7 H9.2 V12 H10.3 V13 H6.3 V12 H7.3 V8 H6.3 Z" fill="#fff"/></svg>
<div class="t" style="left:967.30px;top:663px;font-size:11.7px;color:#50505e;font-weight:400;transform:scaleX(1.0779);transform-origin:0 0;">Display maximum:</div>
<div class="b" style="left:1075px;top:658px;width:115px;height:24px;background:#ffffff;"></div>
<div class="t" style="left:1080.80px;top:664px;font-size:11.7px;color:#4a4a5a;font-weight:400;">25</div>
<svg class="b" style="left:1174px;top:667px" width="10" height="6"><path d="M0 0 H9 L4.5 5 Z" fill="#8e8e98"/></svg>
<div class="t" style="left:1201.90px;top:662px;font-size:11.7px;color:#50505e;font-weight:400;transform:scaleX(1.0173);transform-origin:0 0;">logs per page</div></body></html>
